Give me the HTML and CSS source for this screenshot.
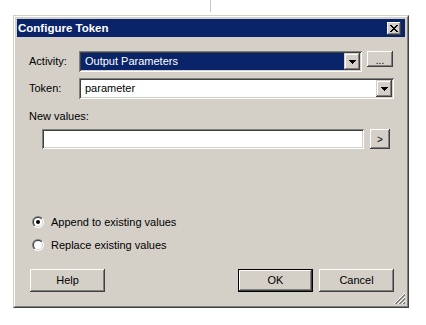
FILE: index.html
```html
<!DOCTYPE html>
<html lang="en">
  <head>
    <meta charset="UTF-8" />
    <title>Configure Token</title>
    <link rel="stylesheet" href="styles.css">
  </head>
  <body>
    <div class="splitter"></div>
    <div class="window">
      <div class="frame">
        <div class="titlebar">
          <span class="title">Configure Token</span>
          <span class="close">
            <svg width="8" height="7" viewBox="0 0 8 7"><path d="M0 0h2v1h-2zM6 0h2v1h-2zM1 1h2v1h-2zM5 1h2v1h-2zM2 2h4v1h-4zM3 3h2v1h-2zM2 4h4v1h-4zM1 5h2v1h-2zM5 5h2v1h-2zM0 6h2v1h-2zM6 6h2v1h-2z" fill="#000"/></svg>
          </span>
        </div>
        <div class="client">
          <div class="row">
            <span class="label">Activity:</span>
            <div class="combo combo-activity">
              <span class="combo-text selected">Output Parameters</span>
              <span class="combo-btn"><svg width="7" height="4" viewBox="0 0 7 4"><path d="M0 0h7v1h-1v1h-1v1h-1v1h-1v-1h-1v-1h-1v-1h-1z" fill="#000"/></svg></span>
            </div>
            <span class="btn btn-browse">...</span>
          </div>
          <div class="row row-token">
            <span class="label">Token:</span>
            <div class="combo combo-token">
              <span class="combo-text">parameter</span>
              <span class="combo-btn"><svg width="7" height="4" viewBox="0 0 7 4"><path d="M0 0h7v1h-1v1h-1v1h-1v1h-1v-1h-1v-1h-1v-1h-1z" fill="#000"/></svg></span>
            </div>
          </div>
          <div class="label label-values">New values:</div>
          <div class="row row-values">
            <div class="field"></div>
            <span class="btn btn-add">&gt;</span>
          </div>
          <div class="radio-row radio-first">
            <svg class="radio" width="12" height="12" viewBox="0 0 12 12">
              <defs>
                <linearGradient id="ring-out" x1="0" y1="0" x2="1" y2="1"><stop offset="0.5" stop-color="#808080"/><stop offset="0.5" stop-color="#fff"/></linearGradient>
                <linearGradient id="ring-in" x1="0" y1="0" x2="1" y2="1"><stop offset="0.5" stop-color="#404040"/><stop offset="0.5" stop-color="#d4d0c8"/></linearGradient>
              </defs>
              <circle cx="6" cy="6" r="6" fill="url(#ring-out)"/>
              <circle cx="6" cy="6" r="5" fill="url(#ring-in)"/>
              <circle cx="6" cy="6" r="4" fill="#fff"/>
              <circle cx="6" cy="6" r="2" fill="#000"/>
            </svg>
            <span>Append to existing values</span>
          </div>
          <div class="radio-row radio-second">
            <svg class="radio" width="12" height="12" viewBox="0 0 12 12">
              <circle cx="6" cy="6" r="6" fill="url(#ring-out)"/>
              <circle cx="6" cy="6" r="5" fill="url(#ring-in)"/>
              <circle cx="6" cy="6" r="4" fill="#fff"/>
            </svg>
            <span>Replace existing values</span>
          </div>
          <div class="buttons">
            <span class="btn btn-help">Help</span>
            <span class="spacer"></span>
            <span class="btn btn-ok">OK</span>
            <span class="btn btn-cancel">Cancel</span>
          </div>
          <svg class="grip" width="12" height="12" viewBox="0 0 12 12" shape-rendering="crispEdges">
            <path d="M1 12L12 1M5 12L12 5M9 12L12 9" stroke="#fff"/>
            <path d="M2 12L12 2M3 12L12 3M6 12L12 6M7 12L12 7M10 12L12 10M11 12L12 11" stroke="#808080"/>
          </svg>
        </div>
      </div>
    </div>
  </body>
</html>
```

FILE: styles.css
```css
* {
  margin: 0;
  padding: 0;
  box-sizing: border-box;
}
body {
  background: #fff;
  font-family: "Liberation Sans", Arial, sans-serif;
  font-size: 11px;
  line-height: 13px;
  color: #000;
}
.splitter {
  margin-left: 210px;
  width: 1px;
  height: 12px;
  background: #c8c8c8;
}
.window {
  margin: 3px 0 0 13px;
  width: 396px;
  height: 293px;
  display: flex;
  border: 1px solid;
  border-color: #d4d0c8 #404040 #404040 #d4d0c8;
}
.frame {
  flex: 1;
  display: flex;
  flex-direction: column;
  padding: 2px;
  background: #d4d0c8;
  border: 1px solid;
  border-color: #fff #808080 #808080 #fff;
}
.titlebar {
  height: 18px;
  display: flex;
  align-items: center;
  justify-content: space-between;
  padding: 0 4px 0 1px;
  background: #0a246a;
}
.title {
  color: #fff;
  font-weight: bold;
  font-size: 11.5px;
}
.close {
  width: 14px;
  height: 13px;
  display: flex;
  align-items: center;
  justify-content: center;
  background: #d4d0c8;
  box-shadow: inset -1px -1px #404040, inset 1px 1px #fff, inset -2px -2px #808080;
}
.client {
  flex: 1;
  position: relative;
  padding: 14px 11px 0 12px;
}
.row {
  display: flex;
  align-items: center;
}
.row > .label {
  width: 50px;
}
.row-token {
  margin-top: 6px;
}
.combo {
  height: 21px;
  display: flex;
  padding: 2px;
  background: #fff;
  box-shadow: inset 1px 1px #808080, inset -1px -1px #fff, inset 2px 2px #404040, inset -2px -2px #d4d0c8;
}
.combo-activity {
  width: 283px;
}
.combo-token {
  width: 315px;
}
.combo-text {
  flex: 1;
  padding: 2px 4px 0;
}
.combo-text.selected {
  background: #0a246a;
  color: #fff;
}
.combo-btn {
  width: 16px;
  display: flex;
  align-items: center;
  justify-content: center;
  background: #d4d0c8;
  box-shadow: inset -1px -1px #404040, inset 1px 1px #d4d0c8, inset -2px -2px #808080, inset 2px 2px #fff;
}
.btn {
  display: flex;
  align-items: center;
  justify-content: center;
  background: #d4d0c8;
  box-shadow: inset -1px -1px #404040, inset 1px 1px #fff, inset -2px -2px #808080, inset 2px 2px #d4d0c8;
}
.btn-browse {
  align-self: flex-start;
  margin-left: 5px;
  width: 26px;
  height: 16px;
  padding-top: 3px;
  font-size: 10px;
}
.label-values {
  margin-top: 11px;
}
.row-values {
  margin-top: 6px;
  padding-left: 13px;
}
.field {
  width: 322px;
  height: 20px;
  background: #fff;
  box-shadow: inset 1px 1px #808080, inset -1px -1px #fff, inset 2px 2px #404040, inset -2px -2px #d4d0c8;
}
.btn-add {
  margin-left: 6px;
  width: 20px;
  height: 20px;
  font-size: 10px;
}
.radio-row {
  height: 16px;
  display: flex;
  align-items: center;
  gap: 7px;
  padding-left: 3px;
}
.radio-first {
  margin-top: 65px;
}
.radio-second {
  margin-top: 7px;
}
.buttons {
  margin-top: 16px;
  display: flex;
  padding-left: 1px;
}
.buttons .btn {
  width: 75px;
  height: 23px;
}
.spacer {
  flex: 1;
}
.btn-ok {
  box-shadow: inset 1px 1px #000, inset -1px -1px #000, inset -2px -2px #404040, inset 2px 2px #fff, inset -3px -3px #808080;
}
.btn-cancel {
  margin-left: 6px;
}
.grip {
  position: absolute;
  right: 0;
  bottom: 0;
}
```
